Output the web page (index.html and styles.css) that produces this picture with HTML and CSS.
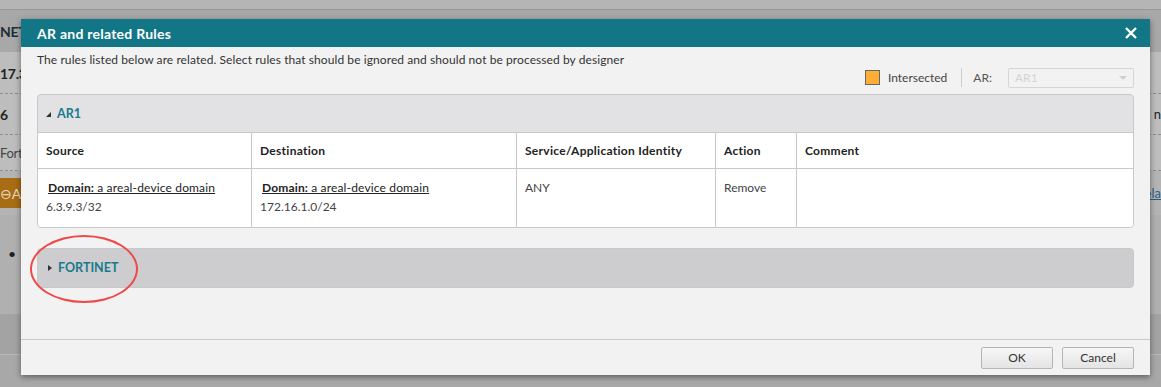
FILE: index.html
```html
<!DOCTYPE html>
<html lang="en">
  <head>
    <meta charset="UTF-8" />
    <meta name="viewport" content="width=device-width, initial-scale=1.0" />
    <title>AR and related Rules</title>
    <link rel="stylesheet" href="styles.css">
  </head>
  <body>
    <!-- page behind the dialog, dimmed -->
    <div class="page">
      <div class="topbar"></div>
      <div class="pagehead">
        <span class="edge-left bold">NET</span>
      </div>
      <div class="rows">
        <div class="row"><span class="edge-left bold">17.3</span></div>
        <div class="row"><span class="edge-left bold">6</span><span class="edge-right">n</span></div>
        <div class="row short"><span class="edge-left">Forti</span></div>
      </div>
      <div class="band">
        <div class="orange"><span class="edge-left">&#8854;AR</span></div>
        <span class="edge-right link">ela</span>
      </div>
      <div class="lower">
        <span class="dot">&#8226;</span>
      </div>
      <div class="lowest"></div>
      <div class="bottom"></div>
    </div>

    <div class="modal">
      <div class="modal-head">
        <span class="modal-title">AR and related Rules</span>
        <svg class="close" width="12" height="12" viewBox="0 0 12 12">
          <path d="M1 1 L11 11 M11 1 L1 11" stroke="#fff" stroke-width="2.4" fill="none" />
        </svg>
      </div>
      <div class="modal-body">
        <p class="desc">The rules listed below are related. Select rules that should be ignored and should not be processed by designer</p>
        <div class="toolbar">
          <span class="swatch"></span>
          <span class="legend">Intersected</span>
          <span class="sep"></span>
          <span class="ar-label">AR:</span>
          <div class="select">
            <span>AR1</span>
            <span class="caret"></span>
          </div>
        </div>

        <div class="panel">
          <div class="panel-head">
            <span class="tri-open"></span>
            <span class="panel-name">AR1</span>
          </div>
          <table class="rules">
            <tr>
              <th class="c1">Source</th>
              <th class="c2">Destination</th>
              <th class="c3">Service/Application Identity</th>
              <th class="c4">Action</th>
              <th>Comment</th>
            </tr>
            <tr>
              <td>
                <span class="dom"><b>Domain:</b> a areal-device domain</span>
                <div class="ip">6.3.9.3/32</div>
              </td>
              <td>
                <span class="dom"><b>Domain:</b> a areal-device domain</span>
                <div class="ip">172.16.1.0/24</div>
              </td>
              <td>ANY</td>
              <td>Remove</td>
              <td></td>
            </tr>
          </table>
        </div>

        <div class="panel closed">
          <div class="panel-head">
            <span class="tri-closed"></span>
            <span class="panel-name">FORTINET</span>
          </div>
          <span class="ring"></span>
        </div>
      </div>
      <div class="modal-foot">
        <button class="btn">OK</button>
        <button class="btn">Cancel</button>
      </div>
    </div>
  </body>
</html>
```

FILE: styles.css
```css
body {
  margin: 0;
  background: #a9a9a9;
  font-family: Lato, "Open Sans", sans-serif;
  font-size: 12px;
  color: #333;
  overflow: hidden;
}

/* dimmed page */
.page {
  display: flex;
  flex-direction: column;
  height: 387px;
}
.topbar {
  height: 9px;
  background: #b5b5b5;
  border-bottom: 1px solid #979797;
}
.pagehead {
  height: 42px;
  display: flex;
  align-items: center;
  background: #a8a8a8;
  font-size: 14px;
  color: #1c2e36;
}
.rows {
  background: #bdbdbd;
  padding-top: 1px;
}
.row {
  height: 40px;
  display: flex;
  align-items: center;
  justify-content: space-between;
  border-bottom: 1px dashed #8e8e8e;
  font-size: 14px;
  color: #222;
}
.row.short {
  height: 35px;
  font-size: 13px;
  color: #444;
}
.bold {
  font-weight: bold;
}
.edge-left {
  white-space: nowrap;
  letter-spacing: -0.3px;
}
.edge-right {
  white-space: nowrap;
  font-size: 13px;
}
.band {
  height: 44px;
  display: flex;
  align-items: center;
  justify-content: space-between;
  background: #b4b4b4;
}
.orange {
  height: 30px;
  width: 40px;
  display: flex;
  align-items: center;
  background: #a86c12;
  color: #e5d7c2;
  font-size: 14px;
}
.link {
  color: #2b5c86;
  text-decoration: underline;
}
.lower {
  height: 99px;
  background: #b0b0b0;
  position: relative;
}
.dot {
  position: absolute;
  left: 8px;
  top: 30px;
  font-size: 14px;
  color: #222;
}
.lowest {
  height: 40px;
  background: #a3a3a3;
  border-bottom: 1px solid #b8b8b8;
}
.bottom {
  flex: 1;
  background: #a8a8a8;
}

/* dialog */
.modal {
  position: absolute;
  left: 21px;
  top: 19px;
  width: 1129px;
  height: 356px;
  background: #f2f2f2;
  box-shadow: 0 2px 6px rgba(0, 0, 0, 0.45);
  display: flex;
  flex-direction: column;
}
.modal-head {
  height: 28px;
  background: #137686;
  display: flex;
  align-items: center;
  justify-content: space-between;
  padding: 0 13px 0 16px;
}
.modal-title {
  color: #fff;
  font-weight: bold;
  font-size: 14px;
  letter-spacing: 0.25px;
}
.modal-body {
  flex: 1;
  padding: 0 16px;
}
.desc {
  margin: 5px 0 0;
  line-height: 15px;
  letter-spacing: 0.08px;
}
.toolbar {
  display: flex;
  align-items: center;
  justify-content: flex-end;
  height: 21px;
}
.swatch {
  width: 13px;
  height: 13px;
  background: #ffae35;
  border: 1px solid #666;
}
.legend {
  margin-left: 8px;
  color: #444;
}
.sep {
  width: 1px;
  height: 19px;
  background: #ccc;
  margin: 0 11px 0 14px;
}
.ar-label {
  color: #555;
}
.select {
  width: 126px;
  height: 20px;
  margin-left: 16px;
  border: 1px solid #d6d6d6;
  border-radius: 2px;
  display: flex;
  align-items: center;
  justify-content: space-between;
  padding: 0 6px;
  box-sizing: border-box;
  color: #d4d4d4;
}
.caret {
  width: 0;
  height: 0;
  border-left: 4px solid transparent;
  border-right: 4px solid transparent;
  border-top: 4px solid #cfcfcf;
}

.panel {
  margin-top: 6px;
  border: 1px solid #c9c9c9;
  border-radius: 4px;
  background: #e2e2e4;
  overflow: hidden;
}
.panel-head {
  height: 37px;
  display: flex;
  align-items: center;
  padding-left: 8px;
}
.tri-open {
  width: 0;
  height: 0;
  border-left: 5px solid transparent;
  border-bottom: 5px solid #333;
  margin-right: 6px;
  margin-top: 1px;
}
.tri-closed {
  width: 0;
  height: 0;
  border-top: 3px solid transparent;
  border-bottom: 3px solid transparent;
  border-left: 4px solid #333;
  margin: 1px 6px 0 3px;
}
.panel-name {
  color: #197a8c;
  font-weight: bold;
  font-size: 12.5px;
}

.rules {
  width: 100%;
  border-collapse: collapse;
  background: #fff;
}
.rules th,
.rules td {
  border-top: 1px solid #c8c8c8;
  border-left: 1px solid #c8c8c8;
  text-align: left;
  vertical-align: top;
  padding: 0 8px;
}
.rules th:first-child,
.rules td:first-child {
  border-left: none;
}
.rules th {
  height: 35px;
  vertical-align: middle;
  font-weight: bold;
  color: #222;
  letter-spacing: 0.28px;
}
.rules td {
  height: 58px;
  padding-top: 11px;
  box-sizing: border-box;
  font-size: 12px;
  color: #444;
}
.c1 { width: 197px; }
.c2 { width: 248px; }
.c3 { width: 182px; }
.c4 { width: 64px; }
.dom {
  color: #222;
  text-decoration: underline;
  padding-left: 2px;
  letter-spacing: 0.15px;
}
.ip {
  margin-top: 4px;
}

.panel.closed {
  margin-top: 20px;
  background: #cdcdcf;
  overflow: visible;
  position: relative;
}
.panel.closed .panel-head {
  height: 38px;
  padding-left: 7px;
}
.ring {
  position: absolute;
  left: -8px;
  top: -14px;
  width: 104px;
  height: 64px;
  border: 2px solid #f04848;
  border-radius: 50%;
}

.modal-foot {
  height: 35px;
  border-top: 1px solid #c8c8c8;
  display: flex;
  justify-content: flex-end;
  align-items: center;
  gap: 9px;
  padding-right: 16px;
}
.btn {
  width: 72px;
  height: 22px;
  border: 1px solid #b5b5b5;
  border-radius: 2px;
  background: linear-gradient(#f6f6f6, #e4e4e4);
  font-family: Lato, "Open Sans", sans-serif;
  font-size: 12px;
  color: #333;
}
```
